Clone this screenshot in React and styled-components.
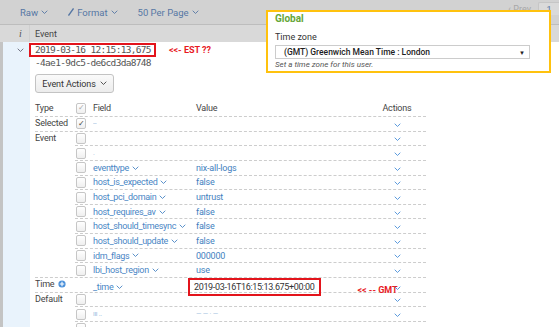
import React from 'react';
import styled, { createGlobalStyle } from 'styled-components';

const GlobalStyle = createGlobalStyle`
  html, body {
    margin: 0;
    padding: 0;
    background: #fff;
    font-family: Roboto, "Liberation Sans", sans-serif;
    color: #444;
  }
`;

const Chevron = ({ color = '#4a86c5', w = 7 }) => (
  <svg width={w} height={w * 0.6} viewBox="0 0 10 6" style={{ display: 'inline-block' }}>
    <polyline points="1,1 5,5 9,1" fill="none" stroke={color} strokeWidth="1.3" />
  </svg>
);

const Page = styled.div`
  position: relative;
  width: 559px;
  height: 327px;
  overflow: hidden;
`;

const Toolbar = styled.div`
  height: 24px;
  background: #d2d2d2;
  border-bottom: 1px solid #bdbdbd;
  display: flex;
  align-items: center;
  padding-left: 20px;
  gap: 20px;
  font-size: 9.5px;
  color: #5677a4;
`;

const ToolItem = styled.span`
  display: inline-flex;
  align-items: center;
  gap: 3px;
`;

const Pager = styled.div`
  margin-left: auto;
  display: flex;
  align-items: flex-start;
  align-self: stretch;
  gap: 7px;
  font-size: 9px;
  color: #a8a8a8;
`;

const PrevLink = styled.span`
  padding-top: 4px;
`;

const PageButton = styled.span`
  width: 20px;
  margin-top: 2px;
  background: #dadada;
  border: 1px solid #c6c6c6;
  border-right: none;
  border-bottom: none;
  border-radius: 2px 0 0 0;
  text-align: center;
  color: #5677a4;
  padding-top: 2px;
`;

const HeaderRow = styled.div`
  display: grid;
  grid-template-columns: 30px 1fr;
  height: 17px;
  background: #d9d9d9;
  font-size: 9px;
  color: #444;
`;

const IndexHead = styled.div`
  display: flex;
  align-items: center;
  padding-left: 19px;
  border-right: 1px solid #cfcfcf;
  font-style: italic;
  font-family: "Liberation Serif", serif;
  font-size: 10px;
  color: #555;
`;

const EventHead = styled.div`
  display: flex;
  align-items: center;
  padding-left: 5px;
`;

const Body = styled.div`
  display: grid;
  grid-template-columns: 30px 1fr;
  height: 285px;
`;

const Gutter = styled.div`
  background: #e9f3fc;
  border-left: 3px solid #c4c4c4;
  display: flex;
  justify-content: center;
  padding-top: 6px;
  padding-left: 8px;
`;

const Content = styled.div`
  padding-left: 5px;
  font-size: 9px;
  letter-spacing: -0.2px;
`;

const RawLine = styled.div`
  display: flex;
  align-items: center;
  font-family: "DejaVu Sans Mono", monospace;
  font-size: 9.5px;
  letter-spacing: -0.68px;
  color: #555;
  height: ${p => p.$h || 'auto'};
`;

const RedBox = styled.span`
  display: inline-flex;
  align-items: center;
  border: 2px solid #e3141c;
  margin-left: -6px;
  padding: 0 3px 0 4px;
  height: 14px;
  box-sizing: border-box;
`;

const Note = styled.span`
  color: #e8191f;
  font-family: Roboto, "Liberation Sans", sans-serif;
  font-weight: 700;
  font-size: 9px;
  letter-spacing: 0;
  margin-left: ${p => p.$gap || '13px'};
  margin-top: ${p => p.$drop || '0'};
`;

const ActionButton = styled.button`
  margin-top: 7px;
  height: 19px;
  width: 79px;
  display: flex;
  align-items: center;
  justify-content: center;
  gap: 4px;
  font-family: Roboto, "Liberation Sans", sans-serif;
  font-size: 9px;
  letter-spacing: -0.1px;
  color: #333;
  border: 1px solid #c3c3c3;
  border-radius: 3px;
  background: linear-gradient(#fafafa, #ececec);
  padding: 0;
`;

const Table = styled.div`
  margin-top: 7px;
  width: 391px;
`;

const HeadLine = styled.div`
  display: grid;
  grid-template-columns: 40px 18px 103px 172px 58px;
  align-items: center;
  height: 17px;
  border-bottom: 1px dashed #cdcdcd;
  box-sizing: border-box;
  color: #444;
`;

const Group = styled.div`
  display: flex;
  border-bottom: 1px dashed #cdcdcd;
`;

const TypeCell = styled.div`
  width: 40px;
  flex: none;
  display: flex;
  align-items: flex-start;
  gap: 4px;
  padding-top: 1px;
  color: #444;
`;

const Rows = styled.div`
  flex: 1;
`;

const Row = styled.div`
  display: grid;
  grid-template-columns: 18px 103px 172px 58px;
  align-items: center;
  height: ${p => (p.$last ? '13.65px' : '14.65px')};
  box-sizing: border-box;
  border-bottom: ${p => (p.$last ? 'none' : '1px dashed #cdcdcd')};
`;

const Box = styled.span`
  width: 10px;
  height: 11px;
  box-sizing: border-box;
  border: 1px solid #c6c6c6;
  border-radius: 2px;
  background: linear-gradient(#ffffff, #efefef);
  display: flex;
  align-items: center;
  justify-content: center;
  font-size: 8px;
  line-height: 1;
  color: ${p => (p.$dim ? '#aaa' : '#444')};
  margin-left: 1px;
`;

const Field = styled.span`
  color: ${p => (p.$plain ? '#444' : '#4a86c5')};
  display: inline-flex;
  align-items: center;
  gap: 3px;
  white-space: nowrap;
  letter-spacing: -0.3px;
  opacity: ${p => (p.$faint ? 0.55 : 1)};
  font-size: ${p => (p.$faint ? '7px' : '9px')};
`;

const Value = styled.span`
  color: #3f7fc0;
  white-space: nowrap;
  display: flex;
  align-items: center;
  opacity: ${p => (p.$faint ? 0.45 : 1)};
  font-size: ${p => (p.$faint ? '7px' : '9px')};
`;

const TimeBox = styled.span`
  display: inline-flex;
  align-items: center;
  height: 18px;
  box-sizing: border-box;
  border: 2px solid #e3141c;
  margin-left: -8px;
  padding: 0 5px 0 4px;
  color: #333;
  font-size: 9px;
  letter-spacing: -0.35px;
`;

const ActionCell = styled.span`
  display: flex;
  justify-content: center;
  padding-top: ${p => (p.$head ? '0' : '2px')};
`;

const Panel = styled.div`
  position: absolute;
  left: 266px;
  top: 10px;
  width: 285px;
  height: 63px;
  box-sizing: border-box;
  border: 2px solid #ffc20e;
  background: #fff;
  padding: 1px 0 0 7px;
  font-size: 9px;
`;

const PanelTitle = styled.div`
  color: #65a637;
  font-weight: 700;
  font-size: 10px;
  height: 12px;
`;

const PanelLabel = styled.div`
  margin-top: 7px;
  color: #333;
  height: 10px;
`;

const Select = styled.div`
  margin-top: 3px;
  width: 255px;
  height: 14px;
  box-sizing: border-box;
  border: 1px solid #cccccc;
  display: flex;
  align-items: center;
  justify-content: space-between;
  padding: 0 4px 0 8px;
  color: #1e1e1e;
  font-weight: 500;
  font-size: 8.5px;
`;

const Caret = styled.span`
  font-size: 6px;
  color: #222;
`;

const Help = styled.div`
  margin-top: 1px;
  font-style: italic;
  color: #555;
  font-size: 8px;
`;

const TimeIcon = () => (
  <svg width="8" height="8" viewBox="0 0 8 8" style={{ marginTop: 1 }}>
    <circle cx="4" cy="4" r="3.6" fill="#4a90d9" />
    <path d="M4 1.8v4.4M1.8 4h4.4" stroke="#fff" strokeWidth="1.1" />
  </svg>
);

const FormatIcon = () => (
  <svg width="6" height="8" viewBox="0 0 6 8">
    <path d="M0.5 7.5L5.5 0.5" stroke="#5677a4" strokeWidth="1.3" />
  </svg>
);

const eventFields = [
  ['eventtype', 'nix-all-logs'],
  ['host_is_expected', 'false'],
  ['host_pci_domain', 'untrust'],
  ['host_requires_av', 'false'],
  ['host_should_timesync', 'false'],
  ['host_should_update', 'false'],
  ['idm_flags', '000000'],
  ['lbi_host_region', 'use'],
];

const groups = [
  { type: 'Selected', rows: [{ checked: true, field: '--', faint: true }] },
  {
    type: 'Event',
    rows: [
      {},
      { field: '.', faint: true },
      ...eventFields.map(([field, value]) => ({ field, value })),
    ],
  },
  { type: 'Time', icon: true, rows: [{ noBox: true, field: '_time', time: true }] },
  {
    type: 'Default',
    rows: [
      {},
      { field: 'ııı ..', faint: true, value: '— — · —', faintValue: true },
      {},
    ],
  },
];

const FieldRow = ({ row, last }) => (
  <Row $last={last}>
    {row.noBox ? <span /> : <Box>{row.checked ? '✓' : ''}</Box>}
    {row.field ? (
      <Field $faint={row.faint}>
        {row.field}
        {!row.faint && <Chevron />}
      </Field>
    ) : (
      <span />
    )}
    {row.time ? (
      <Value>
        <TimeBox>2019-03-16T16:15:13.675+00:00</TimeBox>
        <Note $gap="36px" $drop="5px">&lt;&lt; -- GMT</Note>
      </Value>
    ) : (
      <Value $faint={row.faintValue}>{row.value}</Value>
    )}
    <ActionCell>
      <Chevron color="#4a90d9" />
    </ActionCell>
  </Row>
);

export default function App() {
  return (
    <Page>
      <GlobalStyle />
      <Toolbar>
        <ToolItem>Raw <Chevron color="#5677a4" /></ToolItem>
        <ToolItem><FormatIcon />Format <Chevron color="#5677a4" /></ToolItem>
        <ToolItem>50 Per Page <Chevron color="#5677a4" /></ToolItem>
        <Pager>
          <PrevLink>‹ Prev</PrevLink>
          <PageButton>1</PageButton>
        </Pager>
      </Toolbar>
      <HeaderRow>
        <IndexHead>i</IndexHead>
        <EventHead>Event</EventHead>
      </HeaderRow>
      <Body>
        <Gutter>
          <Chevron color="#667" />
        </Gutter>
        <Content>
          <RawLine $h="15px">
            <RedBox>2019-03-16 12:15:13,675</RedBox>
            <Note>&lt;&lt;- EST ??</Note>
          </RawLine>
          <RawLine $h="10px">-4ae1-9dc5-de6cd3da8748</RawLine>
          <ActionButton>
            Event Actions <Chevron color="#444" />
          </ActionButton>
          <Table>
            <HeadLine>
              <span>Type</span>
              <Box $dim>✓</Box>
              <Field $plain>Field</Field>
              <span>Value</span>
              <ActionCell $head>Actions</ActionCell>
            </HeadLine>
            {groups.map(g => (
              <Group key={g.type}>
                <TypeCell>
                  {g.type}
                  {g.icon && <TimeIcon />}
                </TypeCell>
                <Rows>
                  {g.rows.map((r, i) => (
                    <FieldRow key={i} row={r} last={i === g.rows.length - 1} />
                  ))}
                </Rows>
              </Group>
            ))}
          </Table>
        </Content>
      </Body>
      <Panel>
        <PanelTitle>Global</PanelTitle>
        <PanelLabel>Time zone</PanelLabel>
        <Select>
          <span>(GMT) Greenwich Mean Time : London</span>
          <Caret>▼</Caret>
        </Select>
        <Help>Set a time zone for this user.</Help>
      </Panel>
    </Page>
  );
}
